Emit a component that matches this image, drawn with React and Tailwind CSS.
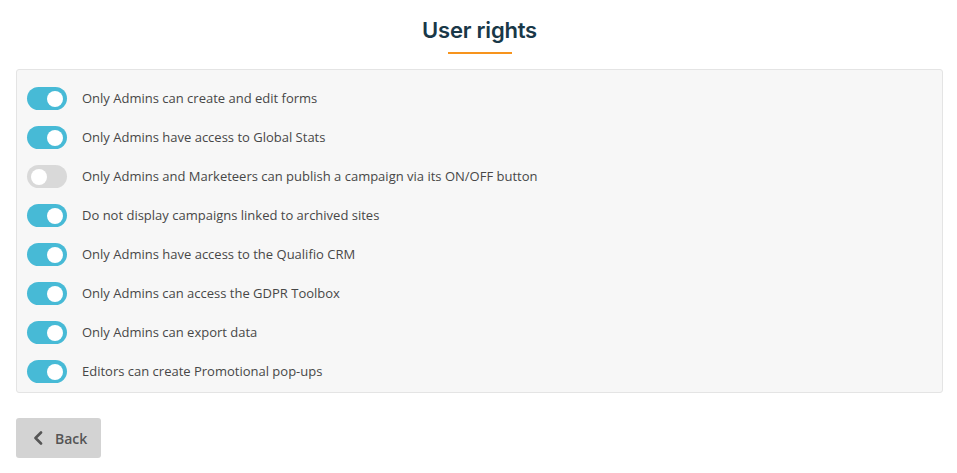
import { useState } from "react";

const RIGHTS = [
    { label: "Only Admins can create and edit forms", on: true },
    { label: "Only Admins have access to Global Stats", on: true },
    { label: "Only Admins and Marketeers can publish a campaign via its ON/OFF button", on: false },
    { label: "Do not display campaigns linked to archived sites", on: true },
    { label: "Only Admins have access to the Qualifio CRM", on: true },
    { label: "Only Admins can access the GDPR Toolbox", on: true },
    { label: "Only Admins can export data", on: true },
    { label: "Editors can create Promotional pop-ups", on: true },
];

export default function App() {
    const [rights, setRights] = useState(RIGHTS);

    const toggle = (i) =>
        setRights((r) => r.map((x, j) => (j === i ? { ...x, on: !x.on } : x)));

    return (
        <div className="min-h-screen bg-white pl-4 pr-[14px] pt-[17px] font-['Open_Sans',sans-serif]">
            {/* Title */}
            <div className="flex flex-col items-center">
                <h1 className="text-[22px] leading-[26px] font-semibold text-[#193848] font-['Inter',sans-serif] tracking-[-0.2px]">
                    User rights
                </h1>
                <div className="mt-[9px] h-[2px] w-[64px] bg-[#f7941d]" />
            </div>

            {/* Rights list */}
            <div className="mt-[15px] rounded-[3px] border border-[#e4e4e4] bg-[#f7f7f7] px-[10px] pt-[9px] pb-[1px]">
                {rights.map((r, i) => (
                    <div key={r.label} className="flex h-[39px] items-center gap-[15px]">
                        <Switch on={r.on} onClick={() => toggle(i)} />
                        <span className="text-[13px] text-[#474747]">{r.label}</span>
                    </div>
                ))}
            </div>

            {/* Back */}
            <button className="mt-[25px] flex h-[40px] w-[85px] items-center gap-[12px] rounded-[3px] bg-[#d3d3d3] pl-[17px] text-[14px] font-semibold text-[#555]">
                <svg width="10" height="14" viewBox="0 0 10 14" fill="none">
                    <path d="M8 1.5 L2.5 7 L8 12.5" stroke="#555" strokeWidth="2.6" strokeLinecap="round" strokeLinejoin="round" />
                </svg>
                Back
            </button>
        </div>
    );
}

function Switch({ on, onClick }) {
    return (
        <button
            onClick={onClick}
            className={`flex h-[23px] w-[40px] shrink-0 items-center rounded-full px-[4px] ${
                on ? "justify-end bg-[#47bad6]" : "justify-start bg-[#d9d9d9]"
            }`}
        >
            <span className="h-[16px] w-[16px] rounded-full bg-white" />
        </button>
    );
}
